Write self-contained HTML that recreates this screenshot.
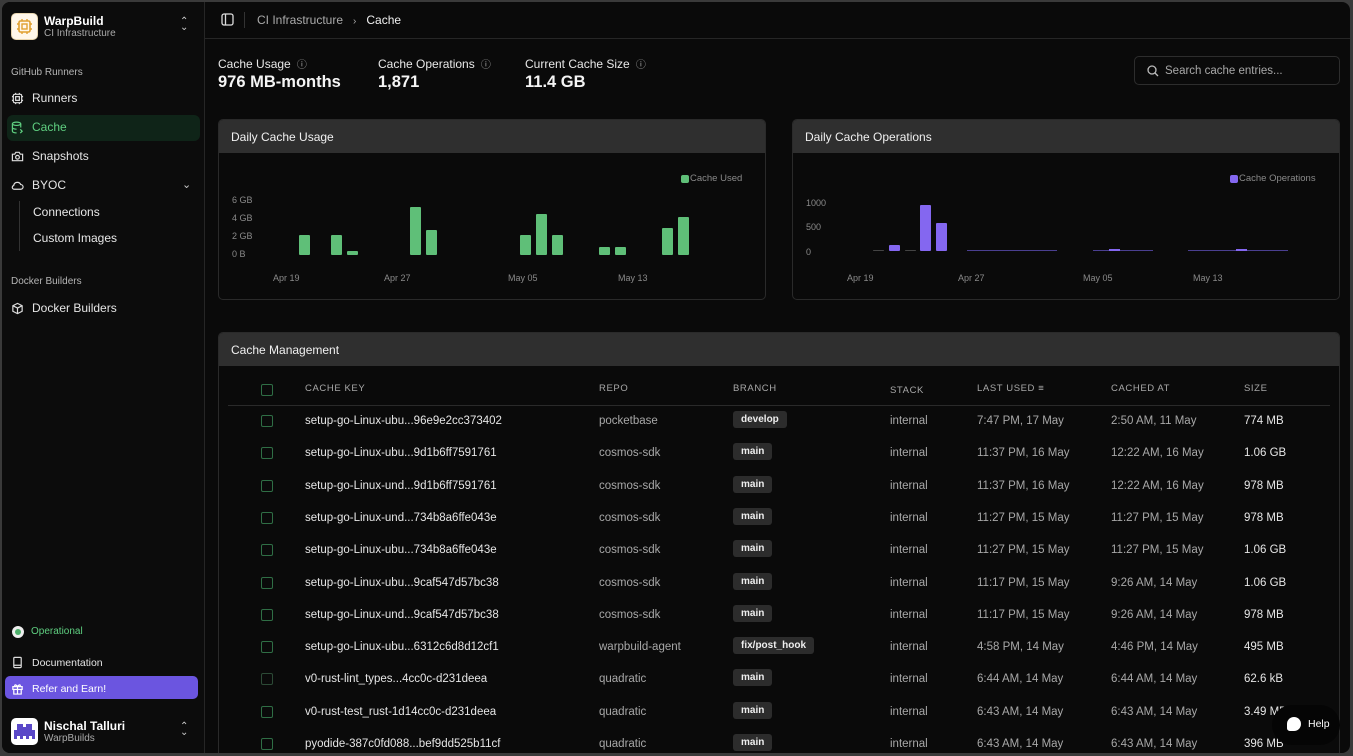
<!DOCTYPE html>
<html><head><meta charset="utf-8"><style>
*{box-sizing:border-box;margin:0;padding:0}
body{width:1353px;height:756px;overflow:hidden;background:#3a3a3a;font-family:"Liberation Sans",sans-serif;color:#e8e8e8;font-size:12px;position:relative}
.frame{position:absolute;left:2px;top:2px;right:3px;bottom:3px;background:#0a0a0a;border-radius:8px;overflow:hidden}
.side{position:absolute;left:0;top:0;width:203px;bottom:0;border-right:1px solid #262626;background:#0c0c0c}
.abs{position:absolute}
.lbl{color:#b5b5b5;font-size:10px}
.nav{position:absolute;left:9px;font-size:12px;color:#e5e5e5;display:flex;align-items:center;gap:8px}
.nav svg{width:13px;height:13px}
.main{position:absolute;left:202px;top:0;right:0;bottom:0}
.card{position:absolute;border:1px solid #2a2a2a;border-radius:5px;overflow:hidden;background:#0a0a0a}
.ch{height:33px;background:#2f2f2f;font-size:12px;padding:10px 12px;color:#f0f0f0}
.ax{position:absolute;font-size:9px;color:#8a8a8a}
.bar{position:absolute;background:#5fbf78;border-radius:1px}
.pb{position:absolute;background:#8467f0;border-radius:1px}
.row{position:absolute;left:0;right:0;height:32px;font-size:11.5px;color:#e6e6e6}
.row span{position:absolute;top:9px}
.cb{position:absolute;left:42px;top:9px;width:12px;height:12px;border:1.3px solid #2f6e45;border-radius:2px}
.br{position:absolute;top:5px;background:#2c2c2c;border-radius:3px;font-size:10px;font-weight:bold;padding:3px 8px;color:#eee}
.g{color:#a8a8a8}
.th{position:absolute;top:17px;font-size:9.5px;letter-spacing:.6px;color:#a8a8a8}
</style></head><body>
<div class="frame">
<div class="side">
 <div class="abs" style="left:9px;top:11px;width:27px;height:27px;background:#fff7ea;border-radius:5px;border:1px solid #e8d6b0">
  <svg width="25" height="25" viewBox="0 0 25 25"><rect x="7" y="7" width="11" height="11" rx="1.5" fill="none" stroke="#e0a030" stroke-width="1.6"/><rect x="10" y="10" width="5" height="5" fill="none" stroke="#e0a030" stroke-width="1.4"/><path d="M10 5v2M15 5v2M10 18v2M15 18v2M5 10h2M5 15h2M18 10h2M18 15h2" stroke="#e0a030" stroke-width="1.4"/></svg></div>
 <div class="abs" style="left:42px;top:12px;font-size:12px;font-weight:bold;color:#fff">WarpBuild</div>
 <div class="abs" style="left:42px;top:26px;font-size:10px;color:#aaa">CI Infrastructure</div>
 <div class="abs" style="left:178px;top:17px;color:#ccc;font-size:10px;line-height:6px">⌃<br>⌄</div>
 <div class="abs lbl" style="left:9px;top:65px">GitHub Runners</div>
 <div class="nav" style="top:89px"><svg viewBox="0 0 14 14" fill="none" stroke="#ddd" stroke-width="1.3"><rect x="2.5" y="2.5" width="9" height="9" rx="1.5"/><rect x="5" y="5" width="4" height="4"/><path d="M5 1v1.5M9 1v1.5M5 11.5V13M9 11.5V13M1 5h1.5M1 9h1.5M11.5 5H13M11.5 9H13"/></svg>Runners</div>
 <div class="abs" style="left:5px;top:113px;width:193px;height:26px;background:#0f2418;border-radius:6px"></div>
 <div class="nav" style="top:118px;color:#5fcf80"><svg viewBox="0 0 14 14" fill="none" stroke="#5fcf80" stroke-width="1.3"><ellipse cx="6" cy="3" rx="4.5" ry="1.8"/><path d="M1.5 3v8c0 1 2 1.8 4.5 1.8M10.5 3v4M1.5 7c0 1 2 1.8 4.5 1.8"/><path d="M10 9l2 2-2 2"/></svg>Cache</div>
 <div class="nav" style="top:147px"><svg viewBox="0 0 14 14" fill="none" stroke="#ddd" stroke-width="1.3"><path d="M1.5 4.5h2.5l1.2-2h3.6l1.2 2h2.5v7h-11z"/><circle cx="7" cy="7.8" r="2"/></svg>Snapshots</div>
 <div class="nav" style="top:176px"><svg viewBox="0 0 14 14" fill="none" stroke="#ddd" stroke-width="1.3"><path d="M4 11h6.5a2.5 2.5 0 0 0 0-5 4 4 0 0 0-7.6 1A2 2 0 0 0 4 11z"/></svg>BYOC</div>
 <div class="abs" style="left:180px;top:176px;color:#ccc;font-size:11px">⌄</div>
 <div class="abs" style="left:17px;top:199px;width:1px;height:50px;background:#333"></div>
 <div class="abs" style="left:31px;top:203px;font-size:12px">Connections</div>
 <div class="abs" style="left:31px;top:229px;font-size:12px">Custom Images</div>
 <div class="abs lbl" style="left:9px;top:274px">Docker Builders</div>
 <div class="nav" style="top:299px"><svg viewBox="0 0 14 14" fill="none" stroke="#ddd" stroke-width="1.3"><path d="M7 1.5l5 2.5v6l-5 2.5-5-2.5V4z M2 4l5 2.5 5-2.5 M7 6.5v6"/></svg>Docker Builders</div>
 <div class="abs" style="left:10px;top:624px;width:12px;height:12px;border-radius:50%;background:#eee"></div>
 <div class="abs" style="left:13px;top:627px;width:6px;height:6px;border-radius:50%;background:#4caf6a"></div>
 <div class="abs" style="left:29px;top:624px;font-size:10px;color:#5fcf80">Operational</div>
 <div class="nav" style="top:654px;font-size:10.5px"><svg viewBox="0 0 14 14" fill="none" stroke="#ddd" stroke-width="1.3"><rect x="3" y="1.5" width="8" height="11" rx="1"/><path d="M3 10h8"/></svg>Documentation</div>
 <div class="abs" style="left:3px;top:674px;width:193px;height:23px;background:#6b55e0;border-radius:5px"></div>
 <div class="nav" style="top:680px;font-size:10.5px;color:#fff"><svg viewBox="0 0 14 14" fill="none" stroke="#fff" stroke-width="1.3"><rect x="2" y="5" width="10" height="3"/><path d="M3 8v5h8V8M7 5v8M7 5C5 2 3 3 4.5 5M7 5c2-3 4-2 2.5 0"/></svg>Refer and Earn!</div>
 <div class="abs" style="left:9px;top:716px;width:27px;height:27px;background:#fff;border-radius:5px;overflow:hidden">
  <svg width="27" height="27" viewBox="0 0 9 9"><path d="M2 2h2v1h1V2h2v4H6v1H5V6H4v1H3V6H2z" fill="#5a48c8"/><path d="M1 4h1v3H1zM7 4h1v3H7z" fill="#5a48c8"/></svg></div>
 <div class="abs" style="left:42px;top:717px;font-size:12px;font-weight:bold;color:#fff">Nischal Talluri</div>
 <div class="abs" style="left:42px;top:731px;font-size:10px;color:#aaa">WarpBuilds</div>
 <div class="abs" style="left:178px;top:722px;color:#ccc;font-size:10px;line-height:6px">⌃<br>⌄</div>
</div>
<div class="main">
 <div class="abs" style="left:0;right:0;top:36px;height:1px;background:#262626"></div>
 <svg class="abs" style="left:17px;top:11px" width="13" height="13" viewBox="0 0 13 13" fill="none" stroke="#ddd" stroke-width="1.3"><rect x="1" y="1" width="11" height="11" rx="2"/><path d="M4.5 1v11"/></svg>
 <div class="abs" style="left:40px;top:10px;width:1px;height:16px;background:#333"></div>
 <div class="abs" style="left:53px;top:11px;font-size:12px;color:#aaa">CI Infrastructure &nbsp;&nbsp;<span style="font-size:10px">›</span>&nbsp;&nbsp; <span style="color:#f0f0f0">Cache</span></div>
 <div class="abs" style="left:14px;top:54px;font-size:12px">Cache Usage <span class="g" style="font-size:10px">&nbsp;ⓘ</span></div>
 <div class="abs" style="left:14px;top:71px;font-size:16.5px;font-weight:bold;color:#f5f5f5">976 MB-months</div>
 <div class="abs" style="left:174px;top:54px;font-size:12px">Cache Operations <span class="g" style="font-size:10px">&nbsp;ⓘ</span></div>
 <div class="abs" style="left:174px;top:71px;font-size:16.5px;font-weight:bold;color:#f5f5f5">1,871</div>
 <div class="abs" style="left:321px;top:54px;font-size:12px">Current Cache Size <span class="g" style="font-size:10px">&nbsp;ⓘ</span></div>
 <div class="abs" style="left:321px;top:71px;font-size:16.5px;font-weight:bold;color:#f5f5f5">11.4 GB</div>
 <div class="abs" style="left:930px;top:54px;width:206px;height:29px;border:1px solid #2d2d2d;border-radius:5px"></div>
 <svg class="abs" style="left:943px;top:63px" width="12" height="12" viewBox="0 0 12 12" fill="none" stroke="#bbb" stroke-width="1.3"><circle cx="5" cy="5" r="4"/><path d="M8 8l3 3"/></svg>
 <div class="abs" style="left:961px;top:63px;font-size:11.5px;color:#a8a8a8">Search cache entries...</div>

 <div class="card" style="left:14px;top:117px;width:548px;height:181px">
  <div class="ch">Daily Cache Usage</div>
  <div class="abs" style="left:462px;top:55px;width:8px;height:8px;background:#5fbf78;border-radius:2px"></div>
  <div class="ax" style="left:471px;top:53px;font-size:9.5px">Cache Used</div>
  <div class="ax" style="left:13px;top:75px">6 GB</div><div class="ax" style="left:13px;top:93px">4 GB</div><div class="ax" style="left:13px;top:111px">2 GB</div><div class="ax" style="left:13px;top:129px">0 B</div>
  <div class="ax" style="left:54px;top:153px">Apr 19</div><div class="ax" style="left:165px;top:153px">Apr 27</div><div class="ax" style="left:289px;top:153px">May 05</div><div class="ax" style="left:399px;top:153px">May 13</div>
  <div class="bar" style="left:80px;top:115px;width:11px;height:20px"></div>
  <div class="bar" style="left:112px;top:115px;width:11px;height:20px"></div>
  <div class="bar" style="left:128px;top:131px;width:11px;height:4px"></div>
  <div class="bar" style="left:191px;top:87px;width:11px;height:48px"></div>
  <div class="bar" style="left:207px;top:110px;width:11px;height:25px"></div>
  <div class="bar" style="left:301px;top:115px;width:11px;height:20px"></div>
  <div class="bar" style="left:317px;top:94px;width:11px;height:41px"></div>
  <div class="bar" style="left:333px;top:115px;width:11px;height:20px"></div>
  <div class="bar" style="left:380px;top:127px;width:11px;height:8px"></div>
  <div class="bar" style="left:396px;top:127px;width:11px;height:8px"></div>
  <div class="bar" style="left:443px;top:108px;width:11px;height:27px"></div>
  <div class="bar" style="left:459px;top:97px;width:11px;height:38px"></div>
 </div>

 <div class="card" style="left:588px;top:117px;width:548px;height:181px">
  <div class="ch">Daily Cache Operations</div>
  <div class="abs" style="left:437px;top:55px;width:8px;height:8px;background:#8467f0;border-radius:2px"></div>
  <div class="ax" style="left:446px;top:53px;font-size:9.5px">Cache Operations</div>
  <div class="ax" style="left:13px;top:78px">1000</div><div class="ax" style="left:13px;top:102px">500</div><div class="ax" style="left:13px;top:127px">0</div>
  <div class="ax" style="left:54px;top:153px">Apr 19</div><div class="ax" style="left:165px;top:153px">Apr 27</div><div class="ax" style="left:290px;top:153px">May 05</div><div class="ax" style="left:400px;top:153px">May 13</div>
  <div class="pb" style="left:96px;top:125px;width:11px;height:6px"></div>
  <div class="pb" style="left:127px;top:85px;width:11px;height:46px"></div>
  <div class="pb" style="left:143px;top:103px;width:11px;height:28px"></div>
  <div class="pb" style="left:80px;top:130px;width:11px;height:1px;background:#444"></div>
  <div class="pb" style="left:112px;top:130px;width:11px;height:1px;background:#444"></div>
  <div class="abs" style="left:174px;top:130px;width:90px;height:1px;background:#4a3f90"></div>
  <div class="abs" style="left:300px;top:130px;width:60px;height:1px;background:#4a3f90"></div>
  <div class="abs" style="left:316px;top:129px;width:11px;height:2px;background:#8467f0"></div>
  <div class="abs" style="left:395px;top:130px;width:100px;height:1px;background:#4a3f90"></div>
  <div class="abs" style="left:443px;top:129px;width:11px;height:2px;background:#8467f0"></div>
 </div>

 <div class="card" style="left:14px;top:330px;width:1122px;height:440px">
  <div class="ch">Cache Management</div>
  <div class="cb" style="top:51px"></div>
  <div class="th" style="left:86px;top:50px">CACHE KEY</div>
  <div class="th" style="left:380px;top:50px">REPO</div>
  <div class="th" style="left:514px;top:50px">BRANCH</div>
  <div class="th" style="left:671px;top:52px">STACK</div>
  <div class="th" style="left:758px;top:50px">LAST USED ≡</div>
  <div class="th" style="left:892px;top:50px">CACHED AT</div>
  <div class="th" style="left:1025px;top:50px">SIZE</div>
  <div class="abs" style="left:9px;right:9px;top:72px;height:1px;background:#2a2a2a"></div>
  <div style="position:absolute;left:0;right:0;top:73px">
   <div class="row" style="top:0"><div class="cb"></div><span style="left:86px">setup-go-Linux-ubu...96e9e2cc373402</span><span class="g" style="left:380px">pocketbase</span><div class="br" style="left:514px">develop</div><span class="g" style="left:671px">internal</span><span class="g" style="left:758px">7:47 PM, 17 May</span><span class="g" style="left:892px">2:50 AM, 11 May</span><span style="left:1025px">774 MB</span></div>
   <div class="row" style="top:32.3px"><div class="cb"></div><span style="left:86px">setup-go-Linux-ubu...9d1b6ff7591761</span><span class="g" style="left:380px">cosmos-sdk</span><div class="br" style="left:514px">main</div><span class="g" style="left:671px">internal</span><span class="g" style="left:758px">11:37 PM, 16 May</span><span class="g" style="left:892px">12:22 AM, 16 May</span><span style="left:1025px">1.06 GB</span></div>
   <div class="row" style="top:64.6px"><div class="cb"></div><span style="left:86px">setup-go-Linux-und...9d1b6ff7591761</span><span class="g" style="left:380px">cosmos-sdk</span><div class="br" style="left:514px">main</div><span class="g" style="left:671px">internal</span><span class="g" style="left:758px">11:37 PM, 16 May</span><span class="g" style="left:892px">12:22 AM, 16 May</span><span style="left:1025px">978 MB</span></div>
   <div class="row" style="top:96.9px"><div class="cb"></div><span style="left:86px">setup-go-Linux-und...734b8a6ffe043e</span><span class="g" style="left:380px">cosmos-sdk</span><div class="br" style="left:514px">main</div><span class="g" style="left:671px">internal</span><span class="g" style="left:758px">11:27 PM, 15 May</span><span class="g" style="left:892px">11:27 PM, 15 May</span><span style="left:1025px">978 MB</span></div>
   <div class="row" style="top:129.2px"><div class="cb"></div><span style="left:86px">setup-go-Linux-ubu...734b8a6ffe043e</span><span class="g" style="left:380px">cosmos-sdk</span><div class="br" style="left:514px">main</div><span class="g" style="left:671px">internal</span><span class="g" style="left:758px">11:27 PM, 15 May</span><span class="g" style="left:892px">11:27 PM, 15 May</span><span style="left:1025px">1.06 GB</span></div>
   <div class="row" style="top:161.5px"><div class="cb"></div><span style="left:86px">setup-go-Linux-ubu...9caf547d57bc38</span><span class="g" style="left:380px">cosmos-sdk</span><div class="br" style="left:514px">main</div><span class="g" style="left:671px">internal</span><span class="g" style="left:758px">11:17 PM, 15 May</span><span class="g" style="left:892px">9:26 AM, 14 May</span><span style="left:1025px">1.06 GB</span></div>
   <div class="row" style="top:193.8px"><div class="cb"></div><span style="left:86px">setup-go-Linux-und...9caf547d57bc38</span><span class="g" style="left:380px">cosmos-sdk</span><div class="br" style="left:514px">main</div><span class="g" style="left:671px">internal</span><span class="g" style="left:758px">11:17 PM, 15 May</span><span class="g" style="left:892px">9:26 AM, 14 May</span><span style="left:1025px">978 MB</span></div>
   <div class="row" style="top:226.1px"><div class="cb"></div><span style="left:86px">setup-go-Linux-ubu...6312c6d8d12cf1</span><span class="g" style="left:380px">warpbuild-agent</span><div class="br" style="left:514px">fix/post_hook</div><span class="g" style="left:671px">internal</span><span class="g" style="left:758px">4:58 PM, 14 May</span><span class="g" style="left:892px">4:46 PM, 14 May</span><span style="left:1025px">495 MB</span></div>
   <div class="row" style="top:258.4px"><div class="cb" style="border-color:#2c4a36"></div><span style="left:86px">v0-rust-lint_types...4cc0c-d231deea</span><span class="g" style="left:380px">quadratic</span><div class="br" style="left:514px">main</div><span class="g" style="left:671px">internal</span><span class="g" style="left:758px">6:44 AM, 14 May</span><span class="g" style="left:892px">6:44 AM, 14 May</span><span style="left:1025px">62.6 kB</span></div>
   <div class="row" style="top:290.7px"><div class="cb"></div><span style="left:86px">v0-rust-test_rust-1d14cc0c-d231deea</span><span class="g" style="left:380px">quadratic</span><div class="br" style="left:514px">main</div><span class="g" style="left:671px">internal</span><span class="g" style="left:758px">6:43 AM, 14 May</span><span class="g" style="left:892px">6:43 AM, 14 May</span><span style="left:1025px">3.49 MB</span></div>
   <div class="row" style="top:323px"><div class="cb"></div><span style="left:86px">pyodide-387c0fd088...bef9dd525b11cf</span><span class="g" style="left:380px">quadratic</span><div class="br" style="left:514px">main</div><span class="g" style="left:671px">internal</span><span class="g" style="left:758px">6:43 AM, 14 May</span><span class="g" style="left:892px">6:43 AM, 14 May</span><span style="left:1025px">396 MB</span></div>
  </div>
 </div>
 <div class="abs" style="left:1068px;top:703px;width:68px;height:40px;border-radius:20px;background:#050505"></div>
 <div class="abs" style="left:1083px;top:715px;width:14px;height:14px;border-radius:50% 50% 50% 20%;background:#fff"></div>
 <div class="abs" style="left:1104px;top:716px;font-size:10.5px;color:#fff">Help</div>
</div>
</div>
</body></html>
